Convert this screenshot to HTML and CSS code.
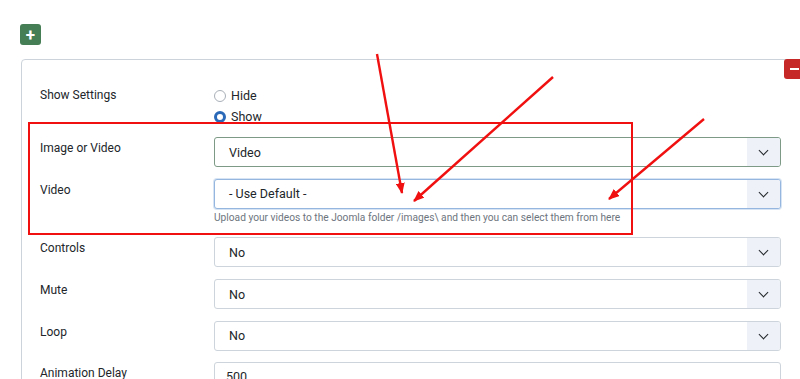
FILE: index.html
```html
<!DOCTYPE html>
<html lang="en">
<head>
  <meta charset="UTF-8">
  <title>Module settings</title>
  <link rel="stylesheet" href="styles.css">
</head>
<body>
  <div class="page">
    <button class="btn-add" type="button">+</button>

    <div class="subform">
      <button class="btn-remove" type="button"><span></span></button>

      <div class="row row-radio">
        <label class="lbl">Show Settings</label>
        <div class="ctrl radios">
          <label class="radio"><span class="dot"></span>Hide</label>
          <label class="radio"><span class="dot on"></span>Show</label>
        </div>
      </div>

      <div class="row">
        <label class="lbl">Image or Video</label>
        <div class="ctrl">
          <div class="select valid"><span>Video</span><i class="caret"></i></div>
        </div>
      </div>

      <div class="row">
        <label class="lbl">Video</label>
        <div class="ctrl">
          <div class="select focus"><span>- Use Default -</span><i class="caret"></i></div>
          <div class="help">Upload your videos to the Joomla folder /images\ and then you can select them from here</div>
        </div>
      </div>

      <div class="row">
        <label class="lbl">Controls</label>
        <div class="ctrl">
          <div class="select"><span>No</span><i class="caret"></i></div>
        </div>
      </div>

      <div class="row">
        <label class="lbl">Mute</label>
        <div class="ctrl">
          <div class="select"><span>No</span><i class="caret"></i></div>
        </div>
      </div>

      <div class="row">
        <label class="lbl">Loop</label>
        <div class="ctrl">
          <div class="select"><span>No</span><i class="caret"></i></div>
        </div>
      </div>

      <div class="row">
        <label class="lbl">Animation Delay</label>
        <div class="ctrl">
          <div class="input">500</div>
        </div>
      </div>
    </div>
  </div>

  <!-- annotation drawn over the screenshot -->
  <div class="mark-box"></div>
  <svg class="marks" width="800" height="379" viewBox="0 0 800 379">
    <defs>
      <marker id="head" markerWidth="11" markerHeight="9" refX="10" refY="4.5" orient="auto" markerUnits="userSpaceOnUse">
        <path d="M0,0 L11,4.5 L0,9 Z" fill="#f01010"/>
      </marker>
    </defs>
    <line x1="377" y1="54" x2="402" y2="193" stroke="#f01010" stroke-width="2.4" marker-end="url(#head)"/>
    <line x1="553" y1="77" x2="414" y2="201" stroke="#f01010" stroke-width="2.4" marker-end="url(#head)"/>
    <line x1="704" y1="119" x2="609" y2="199" stroke="#f01010" stroke-width="2.4" marker-end="url(#head)"/>
  </svg>
</body>
</html>
```

FILE: styles.css
```css
html, body {
  margin: 0;
  padding: 0;
  background: #fff;
  overflow: hidden;
}

body {
  font-family: 'Roboto', 'Liberation Sans', sans-serif;
  color: #22262a;
  width: 800px;
  height: 379px;
  position: relative;
}

.page {
  padding: 24px 0 0 20px;
}

.btn-add {
  display: block;
  width: 21px;
  height: 21px;
  padding: 0;
  border: 0;
  border-radius: 3px;
  background: #457d54;
  color: #fff;
  font: 700 17px/20px 'Roboto', sans-serif;
  text-align: center;
}

.subform {
  position: relative;
  margin: 14px 0 0 1px;
  width: 741px;
  padding: 25px 40px 20px 18px;
  border: 1px solid #cdd3da;
  border-radius: 4px;
}

.btn-remove {
  position: absolute;
  top: -1px;
  right: 16px;
  width: 21px;
  height: 20px;
  padding: 0;
  border: 0;
  border-radius: 3px;
  background: #c52827;
}

.btn-remove span {
  position: absolute;
  left: 6px;
  top: 9px;
  width: 9px;
  height: 2px;
  background: #fff;
}

.row {
  display: flex;
  margin-bottom: 11.7px;
}

.lbl {
  width: 174px;
  flex: none;
  font-size: 12px;
  line-height: 16px;
  padding-top: 3px;
}

.row-radio .lbl {
  padding-top: 2px;
}

.row-radio {
  margin-bottom: 10px;
}

.ctrl {
  flex: 1;
}

.radios {
  display: flex;
  flex-direction: column;
}

.radio {
  display: flex;
  align-items: center;
  gap: 5px;
  font-size: 12.5px;
  line-height: 21px;
  height: 21px;
}

.dot {
  width: 10px;
  height: 10px;
  border: 1px solid #a9b0b8;
  border-radius: 50%;
  background: #fff;
}

.dot.on {
  width: 6px;
  height: 6px;
  border: 3px solid #2a69b8;
}

.select {
  display: flex;
  align-items: center;
  height: 28px;
  border: 1px solid #cdd4dc;
  border-radius: 3px;
  background: #fff;
  font-size: 12.5px;
  overflow: hidden;
}

.select span {
  flex: 1;
  padding-left: 14px;
}

.select.valid {
  border-color: #7c9a85;
}

.select.focus {
  border-color: #95b6de;
  box-shadow: 0 0 0 1px #d6e4f4;
}

.caret {
  width: 33px;
  height: 100%;
  background: #eef2f8;
  position: relative;
}

.caret::after {
  content: '';
  position: absolute;
  left: 13px;
  top: 9px;
  width: 6px;
  height: 6px;
  border-right: 1.6px solid #22262a;
  border-bottom: 1.6px solid #22262a;
  transform: rotate(45deg);
}

.help {
  font-size: 10.2px;
  color: #6d757e;
  line-height: 16px;
  padding-top: 1px;
}

.input {
  height: 28px;
  border: 1px solid #cdd4dc;
  border-radius: 3px;
  font-size: 12.5px;
  line-height: 28px;
  padding-left: 11px;
}

.mark-box {
  position: absolute;
  left: 28px;
  top: 122px;
  width: 601px;
  height: 109px;
  border: 2px solid #f01010;
}

.marks {
  position: absolute;
  left: 0;
  top: 0;
  pointer-events: none;
}
```
